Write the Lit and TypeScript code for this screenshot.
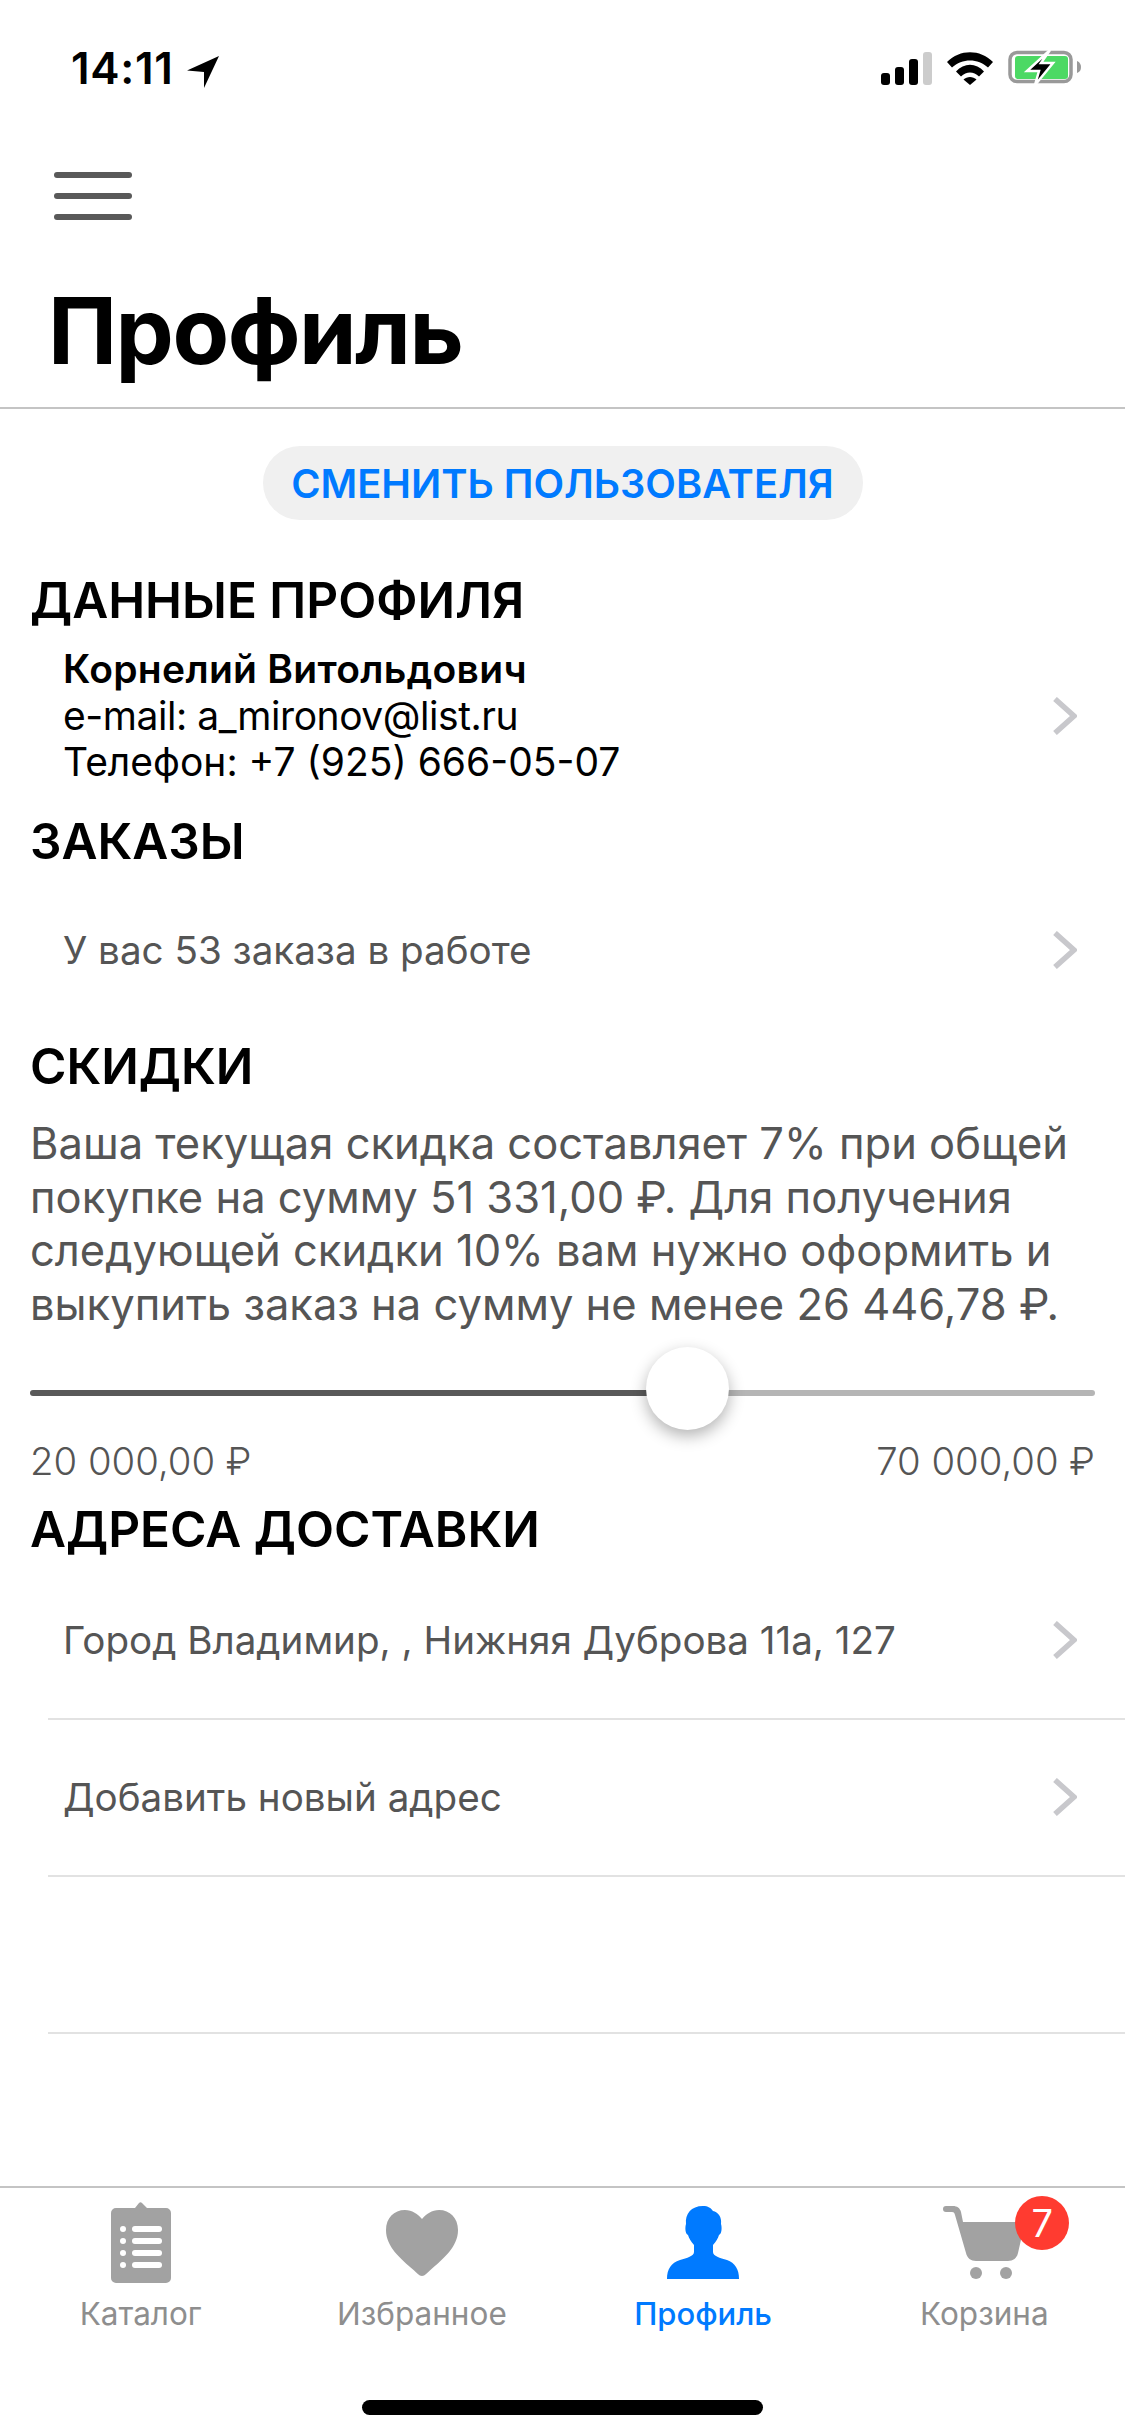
import { LitElement, html, css, svg } from 'lit';
import { customElement } from 'lit/decorators.js';

const chevron = html`<svg class="chev" viewBox="0 0 24 38"><path d="M2 2 L21 19 L2 36" fill="none" stroke="#c8c8cc" stroke-width="5.500"/></svg>`;

const icons = {
  catalog: svg`<path fill="#a2a2a2" d="M5 6h19l4-5a2 2 0 0 1 3 0l5 5H55a5 5 0 0 1 5 5v65a5 5 0 0 1-5 5H5a5 5 0 0 1-5-5V11a5 5 0 0 1 5-5z"/>
    <g fill="#fff"><circle cx="12" cy="27" r="3"/><circle cx="12" cy="39" r="3"/><circle cx="12" cy="51" r="3"/><circle cx="12" cy="63" r="3"/>
    <rect x="21" y="24" width="30" height="6" rx="3"/><rect x="21" y="36" width="30" height="6" rx="3"/><rect x="21" y="48" width="30" height="6" rx="3"/><rect x="21" y="60" width="30" height="6" rx="3"/></g>`,
  heart: svg`<path fill="#a2a2a2" d="M36 66C33 66 31 63 27 59.500C15 49 0 37 0 20C0 8 8 0 19 0C26 0 32 4 36 9C40 4 46 0 53 0C64 0 72 8 72 20C72 37 57 49 45 59.500C41 63 39 66 36 66Z"/>`,
  person: svg`<path fill="#007aff" d="M0 73C0 63 4 57 13 54C20 52 27 50 27 46V39C24 36 22 32 21 29C18 28 18 21 19 18C18 8 24 0 36 0C41 0 44 2 46 5C51 6 55 11 54 18C55 21 55 28 52 29C51 32 49 36 46 39V46C46 50 53 52 60 54C68 57 72 63 72 73Z"/>`,
  cart: svg`<path fill="#a2a2a2" d="M3 0h7c4 0 7 2 8 6l2 10h62l-7 31c-1 5-5 8-10 8H33c-5 0-9-3-10-8L12 9c-.5-2-1-3-3-3H3a3 3 0 0 1 0-6z"/>
    <circle cx="33" cy="67" r="6" fill="#a2a2a2"/><circle cx="63" cy="67" r="6" fill="#a2a2a2"/>`,
};

@customElement('app-root')
export class AppRoot extends LitElement {
  static styles = css`
    :host {
      display: block;
      width: 1125px;
      height: 2436px;
      background: #fff;
      font-family: Inter, 'Liberation Sans', sans-serif;
      color: #000;
      overflow: hidden;
    }
    .page { display: flex; flex-direction: column; height: 2436px; }
    .status {
      height: 136px;
      display: flex;
      align-items: center;
      justify-content: space-between;
      padding: 0 44px 0 71px;
      box-sizing: border-box;
    }
    .time { display: flex; align-items: center; gap: 13px; font-size: 44px; font-weight: 600; letter-spacing: 0.7px; }
    .time svg { margin-top: 7px; }
    .st-icons { display: flex; align-items: center; gap: 15px; }
    .burger { height: 118px; padding: 36px 0 0 54px; box-sizing: border-box; display: flex; flex-direction: column; gap: 15px; }
    .burger i { display: block; width: 78px; height: 6px; border-radius: 3px; background: #595959; }
    h1 { margin: 0; height: 155px; box-sizing: border-box; padding: 22px 0 0 48px; font-size: 92.500px; line-height: 108px; font-weight: 700; letter-spacing: -1.5px; border-bottom: 2px solid #c4c4c4; }
    .btn-wrap { display: flex; justify-content: center; padding-top: 37px; height: 84px; }
    .btn { height: 74px; width: 600px; border-radius: 37px; background: #f0f0f0; color: #007aff; font-size: 39.800px; font-weight: 600; display: flex; align-items: center; justify-content: center; }
    .content { flex: 1; padding-top: 40px; display: flex; flex-direction: column; }
    h2 { margin: 0; padding-left: 30px; font-size: 49.500px; line-height: 60px; font-weight: 600; }
    .user { display: flex; align-items: center; justify-content: space-between; padding: 0 48px 9px 63px; height: 181px; box-sizing: border-box; font-size: 39px; line-height: 46.500px; }
    .user b { font-weight: 600; display: block; letter-spacing: 0.3px; }
    .mail { letter-spacing: -0.45px; }
    .chev { width: 24px; height: 38px; flex: none; }
    .row { display: flex; align-items: center; justify-content: space-between; padding: 0 48px 0 63px; font-size: 38.600px; color: #555; }
    .orders { height: 158px; }
    .discount-h { margin-top: 7px; }
    p { margin: 21px 0 0; padding: 0 30px; font-size: 43.500px; line-height: 53.700px; color: #555; }
    .slider { margin: 19px 30px 0; height: 84px; display: flex; align-items: center; }
    .fill { height: 6px; width: 630px; background: #595959; border-radius: 3px 0 0 3px; }
    .thumb { width: 83px; height: 83px; flex: none; margin: 0 -14px 0 -14px; border-radius: 50%; background: #fff; box-shadow: 0 6px 16px rgba(0, 0, 0, 0.3); position: relative; z-index: 1; transform: translateY(-4px); }
    .rest { flex: 1; height: 6px; background: #b5b5b5; border-radius: 0 3px 3px 0; }
    .range { display: flex; justify-content: space-between; padding: 0 30px; margin-top: 3px; font-size: 38.300px; font-weight: 300; line-height: 46px; color: #555; }
    .addr-h { margin-top: 15px; }
    .list { margin: 4px 0 0 48px; }
    .list .row { height: 157px; padding-left: 15px; box-sizing: border-box; border-bottom: 2px solid #e2e2e2; }
    .tabs { height: 250px; box-sizing: border-box; border-top: 2px solid #c4c4c4; display: flex; flex-direction: column; }
    .tab-row { display: grid; grid-template-columns: repeat(4, 1fr); height: 212px; }
    .tab { display: flex; flex-direction: column; align-items: center; color: #8e8e8e; font-size: 31.500px; font-weight: 400; }
    .tab.on { color: #007aff; font-weight: 500; font-size: 31px; }
    .ic { height: 81px; position: relative; display: flex; align-items: center; margin-top: 14px; }
    .badge { position: absolute; left: 72px; top: -6px; width: 54px; height: 54px; border-radius: 50%; background: #ff3b30; color: #fff; font-size: 38px; display: flex; align-items: center; justify-content: center; }
    .tab span { margin-top: 13px; line-height: 36px; }
    .home { width: 401px; height: 15px; border-radius: 8px; background: #000; align-self: center; }
  `;

  renderTab(label: string, w: number, h: number, body: unknown, on = false, badge = '') {
    return html`<div class="tab ${on ? 'on' : ''}">
      <div class="ic">
        <svg width="${w}" height="${h}" viewBox="0 0 ${w} ${h}">${body}</svg>
        ${badge ? html`<div class="badge">${badge}</div>` : ''}
      </div>
      <span>${label}</span>
    </div>`;
  }

  render() {
    return html`<div class="page">
      <div class="status">
        <div class="time">14:11
          <svg width="32" height="32" viewBox="0 0 32 32"><path d="M32 0 L0 14.500 L17 16 L17 32 Z" fill="#000"/></svg>
        </div>
        <div class="st-icons">
          <svg width="51" height="33" viewBox="0 0 51 33">
            <rect x="0" y="21" width="9" height="12" rx="3"/><rect x="14" y="15" width="9" height="18" rx="3"/><rect x="28" y="7" width="9" height="26" rx="3"/><rect x="42" y="0" width="9" height="33" rx="3" fill="#ccc"/>
          </svg>
          <svg width="46" height="33" viewBox="0 0 46 33">
            <path d="M0 10C13-3 33-3 46 10L41 15.500C31 6 15 6 5 15.500Z"/>
            <path d="M9 19.500C17 10.500 29 10.500 37 19.500L32 24.500C26.500 19 19.500 19 14 24.500Z"/>
            <path d="M16.500 27.500C20 24 26 24 29.500 27.500L23 33Z"/>
          </svg>
          <svg width="73" height="36" viewBox="0 0 73 36">
            <rect x="2" y="2.500" width="61" height="29" rx="7" fill="none" stroke="#999" stroke-width="3.500"/>
            <rect x="7" y="6" width="53" height="23" rx="3" fill="#4cd964"/>
            <path d="M69 11C72 12 73 15 73 17C73 20 72 22 69 23Z" fill="#999"/>
            <path d="M42 0 L19 21 H31 L27 35 L45 13 H33 Z" fill="#000" stroke="#fff" stroke-width="2.500"/>
          </svg>
        </div>
      </div>
      <div class="burger"><i></i><i></i><i></i></div>
      <h1>Профиль</h1>
      <div class="btn-wrap"><div class="btn">СМЕНИТЬ ПОЛЬЗОВАТЕЛЯ</div></div>
      <div class="content">
        <h2>ДАННЫЕ ПРОФИЛЯ</h2>
        <div class="user">
          <div>
            <b>Корнелий Витольдович</b>
            <span class="mail">e-mail: a_mironov@list.ru</span><br />
            Телефон: +7 (925) 666-05-07
          </div>
          ${chevron}
        </div>
        <h2>ЗАКАЗЫ</h2>
        <div class="row orders"><span>У вас 53 заказа в работе</span>${chevron}</div>
        <h2 class="discount-h">СКИДКИ</h2>
        <p>Ваша текущая скидка составляет 7% при общей покупке на сумму 51 331,00 ₽. Для получения следующей скидки 10% вам нужно оформить и выкупить заказ на сумму не менее 26 446,78 ₽.</p>
        <div class="slider"><div class="fill"></div><div class="thumb"></div><div class="rest"></div></div>
        <div class="range"><span>20 000,00 ₽</span><span>70 000,00 ₽</span></div>
        <h2 class="addr-h">АДРЕСА ДОСТАВКИ</h2>
        <div class="list">
          <div class="row"><span>Город Владимир, , Нижняя Дуброва 11а, 127</span>${chevron}</div>
          <div class="row"><span>Добавить новый адрес</span>${chevron}</div>
          <div class="row"></div>
        </div>
      </div>
      <div class="tabs">
        <div class="tab-row">
          ${this.renderTab('Каталог', 60, 81, icons.catalog)}
          ${this.renderTab('Избранное', 72, 66, icons.heart)}
          ${this.renderTab('Профиль', 72, 73, icons.person, true)}
          ${this.renderTab('Корзина', 82, 73, icons.cart, false, '7')}
        </div>
        <div class="home"></div>
      </div>
    </div>`;
  }
}
